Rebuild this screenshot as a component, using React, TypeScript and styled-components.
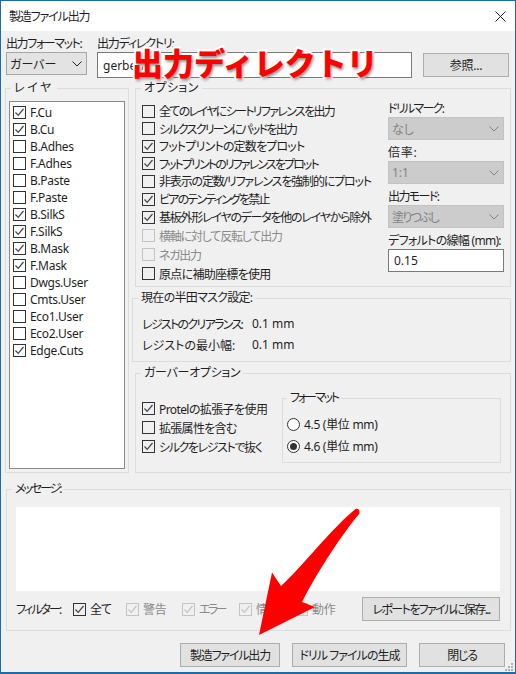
import React from 'react';
import styled, { createGlobalStyle } from 'styled-components';

const GlobalStyle = createGlobalStyle`
    html, body { margin: 0; padding: 0; background: #f0f0f0; }
    body {
        font-family: "Noto Sans", "Noto Sans CJK JP", sans-serif;
        font-size: 12px;
        color: #1f1f1f;
        font-feature-settings: "palt";
    }
`;

const Frame = styled.div`
    position: relative;
    box-sizing: border-box;
    width: 516px;
    height: 674px;
    overflow: hidden;
    display: flex;
    flex-direction: column;
    border: 1px solid #1b6ca8;
    border-bottom-width: 2px;
    background: #f0f0f0;
`;

const TitleBar = styled.div`
    flex: none;
    height: 30px;
    padding: 0 9px 0 8px;
    display: flex;
    align-items: center;
    justify-content: space-between;
    background: #fff;
    letter-spacing: -1.15px;
`;

const Content = styled.div`
    flex: 1;
    display: flex;
    flex-direction: column;
    padding: 0 4px;
`;

const TopRow = styled.div`
    display: grid;
    grid-template-columns: 81px 315px 87px;
    column-gap: 10px;
    margin-left: 1px;
    padding-top: 5px;
    height: 42px;
`;

const Field = styled.div`
    display: flex;
    flex-direction: column;
`;

const FieldLabel = styled.label<{ $track?: number }>`
    height: 16px;
    line-height: 16px;
    white-space: nowrap;
    letter-spacing: ${p => p.$track ?? -0.3}px;
`;

const StackLabel = styled(FieldLabel)`
    height: 17px;
    line-height: 17px;
`;

const Select = styled.div<{ $disabled?: boolean; $track?: number }>`
    box-sizing: border-box;
    height: 23px;
    padding: 0 4px 0 3px;
    display: flex;
    align-items: center;
    justify-content: space-between;
    border: 1px solid ${p => (p.$disabled ? '#c2c2c2' : '#a6a6a6')};
    background: ${p => (p.$disabled ? '#cccccc' : '#e3e3e3')};
    color: ${p => (p.$disabled ? '#838383' : '#1f1f1f')};
    letter-spacing: ${p => p.$track ?? 0}px;
`;

const TextInput = styled.input<{ $height: number }>`
    box-sizing: border-box;
    width: 100%;
    height: ${p => p.$height}px;
    padding: 0 5px;
    border: 1px solid #7a7a7a;
    background: #fff;
    font: inherit;
    color: #1f1f1f;
    outline: none;
`;

const Button = styled.button<{ $width: number; $track?: number }>`
    box-sizing: border-box;
    flex: none;
    width: ${p => p.$width}px;
    height: 24px;
    padding: 0;
    border: 1px solid #adadad;
    background: #e1e1e1;
    font: inherit;
    color: #1f1f1f;
    white-space: nowrap;
    letter-spacing: ${p => p.$track ?? -0.2}px;
`;

const BrowseButton = styled(Button)`
    margin: 17px 0 0 1px;
`;

const MainRow = styled.div`
    display: flex;
    gap: 6px;
    margin-top: 3px;
    height: 392px;
`;

const Group = styled.fieldset`
    box-sizing: border-box;
    min-width: 0;
    margin: 0;
    padding: 0;
    border: 1px solid #dcdcdc;
`;

const Legend = styled.legend<{ $track?: number }>`
    height: 14px;
    line-height: 14px;
    margin-left: 5px;
    padding: 0 3px;
    white-space: nowrap;
    letter-spacing: ${p => p.$track ?? -0.3}px;
`;

const LayerGroup = styled(Group)`
    flex: none;
    width: 124px;
`;

const LayerList = styled.div`
    box-sizing: border-box;
    height: 368px;
    margin: 6px 3px 0;
    padding: 2px 3px;
    border: 1px solid #8a8a90;
    background: #fff;
`;

const SideColumn = styled.div`
    flex: 1;
    min-width: 0;
    display: flex;
    flex-direction: column;
`;

const OptionsGroup = styled(Group)`
    height: 206px;
`;

const OptionsBody = styled.div`
    display: flex;
    justify-content: space-between;
    padding: 5px 6px 0;
`;

const OptionRows = styled.div`
    padding-top: 2px;
`;

const SettingStack = styled.div`
    flex: none;
    width: 116px;
    display: flex;
    flex-direction: column;
    gap: 4px;
`;

const MaskGroup = styled(Group)`
    height: 71px;
    margin: 4px 0 0 -3px;
`;

const MaskGrid = styled.div`
    display: grid;
    grid-template-columns: 110px 1fr;
    grid-auto-rows: 21px;
    align-items: center;
    padding: 8px 0 0 9px;
`;

const MaskLabel = styled.span<{ $track: number }>`
    white-space: nowrap;
    letter-spacing: ${p => p.$track}px;
`;

const GerberGroup = styled(Group)`
    flex: 1;
    margin-top: 4px;
`;

const GerberBody = styled.div`
    display: flex;
    justify-content: space-between;
    padding: 11px 9px 0 6px;
`;

const GerberRows = styled.div`
    padding-top: 8px;
`;

const FormatGroup = styled(Group)`
    width: 219px;
    height: 72px;
`;

const FormatLegend = styled(Legend)`
    margin-left: 4px;
`;

const RadioRows = styled.div`
    padding: 8px 0 0 4px;
`;

const MessageGroup = styled(Group)`
    height: 149px;
    margin: 9px 0 0 1px;
`;

const MessageBody = styled.div`
    padding: 11px 10px 0 9px;
`;

const MessageArea = styled.div`
    height: 84px;
    background: #fff;
`;

const FilterRow = styled.div`
    display: grid;
    grid-template-columns: 57px 53px 56px 57px 56px 1fr auto;
    align-items: center;
    height: 24px;
    margin-top: 6px;
`;

const FilterLabel = styled.span`
    white-space: nowrap;
    letter-spacing: -1.9px;
`;

const ActionBar = styled.div`
    display: flex;
    justify-content: flex-end;
    gap: 12px;
    margin: 12px 6px 0 0;
`;

const CheckRow = styled.div<{ $height: number; $disabled?: boolean; $track?: number }>`
    height: ${p => p.$height}px;
    display: flex;
    align-items: center;
    gap: 4px;
    white-space: nowrap;
    letter-spacing: ${p => p.$track ?? -0.3}px;
    color: ${p => (p.$disabled ? '#8a8a8a' : '#1f1f1f')};
`;

const Box = styled.span<{ $disabled?: boolean; $white?: boolean }>`
    box-sizing: border-box;
    flex: none;
    width: 13px;
    height: 13px;
    display: flex;
    align-items: center;
    justify-content: center;
    border: 1px solid ${p => (p.$disabled ? '#c4c4c4' : '#333')};
    background: ${p => (p.$white ? '#fff' : 'transparent')};
    color: ${p => (p.$disabled ? '#c4c4c4' : '#444')};
`;

const RadioCircle = styled(Box)`
    border-radius: 50%;
`;

const RadioDot = styled.span`
    width: 7px;
    height: 7px;
    border-radius: 50%;
    background: #333;
`;

const Callout = styled.div`
    position: absolute;
    left: 131px;
    top: 39px;
    font-family: "Noto Sans CJK JP", sans-serif;
    font-feature-settings: normal;
    font-size: 31px;
    font-weight: 900;
    line-height: 44px;
    white-space: nowrap;
    color: #ff0000;
    -webkit-text-stroke: 4px #fff;
    paint-order: stroke fill;
    text-shadow: 1px 2px 3px rgba(0, 0, 0, 0.45);
`;

const ArrowLayer = styled.svg`
    position: absolute;
    left: 239px;
    top: 499px;
`;

const Grip = styled.svg`
    position: absolute;
    right: 1px;
    bottom: 0;
`;

const Chevron = () => (
    <svg width="10" height="6" viewBox="0 0 10 6" fill="none" stroke="currentColor" strokeWidth="1">
        <path d="M0.5 0.5 L5 5 L9.5 0.5" />
    </svg>
);

const Tick = () => (
    <svg width="11" height="11" viewBox="0 0 11 11" fill="none" stroke="currentColor" strokeWidth="1.2">
        <path d="M1.5 5.5 L4.2 8.4 L9.5 2" />
    </svg>
);

type CheckProps = { label?: string; checked?: boolean; disabled?: boolean; white?: boolean; height?: number; track?: number };

const Check: React.FC<CheckProps> = ({ label, checked, disabled, white, height = 17, track }) => (
    <CheckRow $height={height} $disabled={disabled} $track={track}>
        <Box $disabled={disabled} $white={white}>{checked && <Tick />}</Box>
        {label && <span>{label}</span>}
    </CheckRow>
);

const Radio: React.FC<{ label: string; checked?: boolean }> = ({ label, checked }) => (
    <CheckRow $height={22}>
        <RadioCircle $white>{checked && <RadioDot />}</RadioCircle>
        <span>{label}</span>
    </CheckRow>
);

const layers = [
    ['F.Cu', true], ['B.Cu', true], ['B.Adhes', false], ['F.Adhes', false], ['B.Paste', false],
    ['F.Paste', false], ['B.SilkS', true], ['F.SilkS', true], ['B.Mask', true], ['F.Mask', true],
    ['Dwgs.User', false], ['Cmts.User', false], ['Eco1.User', false], ['Eco2.User', false], ['Edge.Cuts', true],
] as const;

// track = letter spacing per label, the kana in the original font are narrower
const options: CheckProps[] = [
    { label: '全てのレイヤにシートリファレンスを出力', height: 18, track: -1.67 },
    { label: 'シルクスクリーンにパッドを出力', height: 17, track: -1.7 },
    { label: 'フットプリントの定数をプロット', checked: true, height: 18, track: -0.8 },
    { label: 'フットプリントのリファレンスをプロット', checked: true, height: 17, track: -1.9 },
    { label: '非表示の定数/リファレンスを強制的にプロット', height: 18, track: -1.16 },
    { label: 'ビアのテンティングを禁止', checked: true, height: 18, track: -1.8 },
    { label: '基板外形レイヤのデータを他のレイヤから除外', checked: true, height: 18, track: -1.25 },
    { label: '横軸に対して反転して出力', disabled: true, height: 19, track: -1.2 },
    { label: 'ネガ出力', disabled: true, height: 19, track: -1.3 },
    { label: '原点に補助座標を使用', height: 19, track: -0.7 },
];

export default function App() {
    return (
        <Frame>
            <GlobalStyle />
            <TitleBar>
                <span>製造ファイル出力</span>
                <svg width="11" height="11" viewBox="0 0 11 11" stroke="#222" strokeWidth="1">
                    <path d="M0.5 0.5 L10.5 10.5 M10.5 0.5 L0.5 10.5" />
                </svg>
            </TitleBar>
            <Content>
                <TopRow>
                    <Field>
                        <FieldLabel $track={-1.4}>出力フォーマット:</FieldLabel>
                        <Select>ガーバー<Chevron /></Select>
                    </Field>
                    <Field>
                        <FieldLabel $track={-1.2}>出力ディレクトリ:</FieldLabel>
                        <TextInput $height={26} readOnly value="gerber/" />
                    </Field>
                    <BrowseButton $width={86}>参照...</BrowseButton>
                </TopRow>

                <MainRow>
                    <LayerGroup>
                        <Legend $track={2.5}>レイヤ</Legend>
                        <LayerList>
                            {layers.map(([name, on]) => (
                                <Check key={name} label={name} checked={on} white />
                            ))}
                        </LayerList>
                    </LayerGroup>

                    <SideColumn>
                        <OptionsGroup>
                            <Legend $track={0.4}>オプション</Legend>
                            <OptionsBody>
                                <OptionRows>
                                    {options.map(o => (
                                        <Check key={o.label} {...o} />
                                    ))}
                                </OptionRows>
                                <SettingStack>
                                    <Field>
                                        <StackLabel $track={-1.7}>ドリルマーク:</StackLabel>
                                        <Select $disabled>なし<Chevron /></Select>
                                    </Field>
                                    <Field>
                                        <StackLabel $track={0.7}>倍率:</StackLabel>
                                        <Select $disabled>1:1<Chevron /></Select>
                                    </Field>
                                    <Field>
                                        <StackLabel $track={-1.6}>出力モード:</StackLabel>
                                        <Select $disabled $track={-1.8}>塗りつぶし<Chevron /></Select>
                                    </Field>
                                    <Field>
                                        <StackLabel $track={-0.7}>デフォルトの線幅 (mm):</StackLabel>
                                        <TextInput $height={23} readOnly value="0.15" />
                                    </Field>
                                </SettingStack>
                            </OptionsBody>
                        </OptionsGroup>

                        <MaskGroup>
                            <Legend $track={-0.7}>現在の半田マスク設定:</Legend>
                            <MaskGrid>
                                <MaskLabel $track={-1.7}>レジストのクリアランス:</MaskLabel>
                                <span>0.1 mm</span>
                                <MaskLabel $track={0}>レジストの最小幅:</MaskLabel>
                                <span>0.1 mm</span>
                            </MaskGrid>
                        </MaskGroup>

                        <GerberGroup>
                            <Legend>ガーバーオプション</Legend>
                            <GerberBody>
                                <GerberRows>
                                    <Check label="Protelの拡張子を使用" checked height={19} track={-0.6} />
                                    <Check label="拡張属性を含む" height={19} track={-0.7} />
                                    <Check label="シルクをレジストで抜く" checked height={19} track={-1.4} />
                                </GerberRows>
                                <FormatGroup>
                                    <FormatLegend $track={-2.1}>フォーマット</FormatLegend>
                                    <RadioRows>
                                        <Radio label="4.5 (単位 mm)" />
                                        <Radio label="4.6 (単位 mm)" checked />
                                    </RadioRows>
                                </FormatGroup>
                            </GerberBody>
                        </GerberGroup>
                    </SideColumn>
                </MainRow>

                <MessageGroup>
                    <Legend $track={-2.1}>メッセージ:</Legend>
                    <MessageBody>
                        <MessageArea />
                        <FilterRow>
                            <FilterLabel>フィルター:</FilterLabel>
                            <Check label="全て" checked height={24} track={-1} />
                            <Check label="警告" checked disabled height={24} />
                            <Check label="エラー" checked disabled height={24} track={-2.6} />
                            <Check label="情報" checked disabled height={24} />
                            <Check label="動作" checked disabled height={24} />
                            <Button $width={138} $track={-1.6}>レポートをファイルに保存...</Button>
                        </FilterRow>
                    </MessageBody>
                </MessageGroup>

                <ActionBar>
                    <Button $width={100} $track={-1.2}>製造ファイル出力</Button>
                    <Button $width={115} $track={-0.95}>ドリル ファイルの生成</Button>
                    <Button $width={86} $track={-1.2}>閉じる</Button>
                </ActionBar>
            </Content>

            <Callout>出力ディレクトリ</Callout>

            <ArrowLayer width="125" height="140" viewBox="239 499 125 140">
                <path
                    fill="#ff0000"
                    d="M354.5 508 C 330 528 300 567 280 585 L 271 571.5 L 258 634 L 314 606 L 301 601 C 318 568 342 532 358.5 512.5 Q 359 507 354.5 508 Z"
                />
            </ArrowLayer>

            <Grip width="10" height="10" viewBox="0 0 10 10" fill="#b0b0b0">
                <rect x="7" y="1" width="2" height="2" />
                <rect x="4" y="4" width="2" height="2" />
                <rect x="7" y="4" width="2" height="2" />
                <rect x="1" y="7" width="2" height="2" />
                <rect x="4" y="7" width="2" height="2" />
                <rect x="7" y="7" width="2" height="2" />
            </Grip>
        </Frame>
    );
}
